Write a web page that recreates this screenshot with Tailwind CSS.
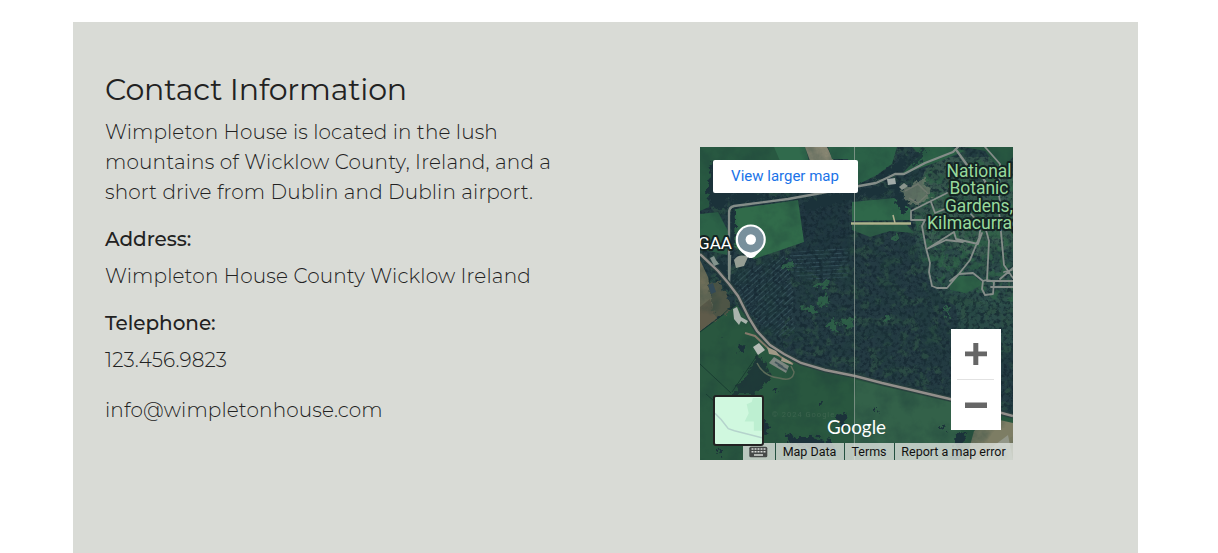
<!DOCTYPE html>
<html lang="en"><head><meta charset="utf-8"><title>Contact Information</title>
<script src="https://cdn.jsdelivr.net/npm/@tailwindcss/browser@4"></script></head>
<body class="h-[553px] overflow-hidden bg-white pt-[22px] pl-[73px]">
<section class="flex h-[531px] w-[1065px] bg-[#d9dbd6] text-[#222] font-['Montserrat','Inter',sans-serif]">
  <div class="w-[595px] pt-[50px] pl-8 whitespace-nowrap text-[20px] leading-[30px] font-light">
    <h2 class="text-[30px] leading-9 font-normal mb-[9px]"><span class="tracking-[-0.15px]">Contact Information</span></h2>
    <p class="mb-[17px]"><span class="tracking-[0.12px]">Wimpleton House is located in the lush</span><br><span class="tracking-[0.16px]">mountains of Wicklow County, Ireland, and a</span><br><span class="tracking-[0.12px]">short drive from Dublin and Dublin airport.</span></p>
    <h3 class="mb-[7px] font-medium"><span class="tracking-[-0.05px]">Address:</span></h3>
    <p class="mb-[17px]"><span class="tracking-[0.15px]">Wimpleton House County Wicklow Ireland</span></p>
    <h3 class="mb-[7px] font-medium"><span class="tracking-[-0.05px]">Telephone:</span></h3>
    <p class="mb-5"><span class="tracking-[0.12px]">123.456.9823</span></p>
    <p><span class="tracking-[0.12px]">info@wimpletonhouse.com</span></p>
  </div>
  <div class="pt-[125px] pl-8">
    <div class="relative h-[313px] w-[313px] overflow-hidden font-['Roboto',sans-serif]">
      <svg class="block" width="313" height="313" viewBox="0 0 313 313">
        <defs>
          <filter id="trees" x="0" y="0" width="100%" height="100%" color-interpolation-filters="sRGB"><feTurbulence type="fractalNoise" baseFrequency=".26" numOctaves="4" seed="7"/><feColorMatrix values="0 0 0 0 .08  0 0 0 0 .15  0 0 0 0 .19  4 2 0 0 -2.8"/></filter>
          <filter id="light" x="0" y="0" width="100%" height="100%" color-interpolation-filters="sRGB"><feTurbulence type="fractalNoise" baseFrequency=".1" numOctaves="5" seed="3"/><feColorMatrix values="0 0 0 0 .19  0 0 0 0 .33  0 0 0 0 .27  0 5 0 0 -2.5"/></filter>
          <filter id="garden" x="0" y="0" width="100%" height="100%" color-interpolation-filters="sRGB"><feTurbulence type="fractalNoise" baseFrequency=".13" numOctaves="4" seed="9" result="n"/><feColorMatrix values="0 0 0 0 .2  0 0 0 0 .42  0 0 0 0 .29  0 6 0 0 -2.900"/><feComposite in2="SourceAlpha" operator="in"/></filter>
          <filter id="grass" x="0" y="0" width="100%" height="100%" color-interpolation-filters="sRGB"><feTurbulence type="fractalNoise" baseFrequency=".05" numOctaves="6" seed="12"/><feColorMatrix values="0 0 0 0 .12  0 0 0 0 .25  0 0 0 0 .23  2.200 0 0 0 -.9"/></filter>
          <filter id="rough" x="-10%" y="-10%" width="120%" height="120%" color-interpolation-filters="sRGB"><feTurbulence type="fractalNoise" baseFrequency=".22" numOctaves="3" seed="4"/><feDisplacementMap in="SourceGraphic" scale="12" xChannelSelector="R" yChannelSelector="G"/><feGaussianBlur stdDeviation=".5"/></filter>
          <pattern id="rows" width="5" height="4" patternUnits="userSpaceOnUse" patternTransform="rotate(-3)"><path d="M0 1.500H5" stroke="#34505a" stroke-width="1"/></pattern>
          <pattern id="diag" width="5" height="4" patternUnits="userSpaceOnUse" patternTransform="rotate(-42)"><path d="M0 1.500H5" stroke="#36525a" stroke-width="1"/></pattern>
        </defs>
        <path fill="#243b43" d="M0 0h313v313H0z"/>
        <path fill="#345650" d="M212 70 313 70V158L275 160 245 155 220 120z" opacity=".6"/>
        <path fill="#3e5f52" d="M225 22 245 10 290 10 313 30V100L280 110 230 95 212 70z" opacity=".8"/>
        <path fill="#31564f" d="M255 155 313 150V205H262z" opacity=".6"/>
        <rect width="313" height="313" filter="url(#light)" opacity=".65"/>
        <path d="M100 58 148 48 150 110 122 132 85 110 103 97z" fill="#1f353f" opacity=".7"/><path d="M86 106 148 100V132L115 134 92 127z" fill="url(#rows)"/>
        <path d="M31 128 84 109 90 127 92 160 78 190 60 176 43 159z" fill="#1f353f" opacity=".7"/><path d="M31 128 84 109 90 127 94 150 92 166 96 185 78 190 60 176 43 159z" fill="url(#diag)"/>
        <rect width="313" height="313" filter="url(#trees)" opacity=".7"/>
        <path d="M225 25 313 5V155L248 145 222 115 214 65z" filter="url(#garden)" opacity=".65"/>
        <g fill="#285841">
          <path d="M0 0H106L108 13 12 14 9 60 0 64z"/>
          <path fill="#306a4c" d="M74 0H105L109 14H80z"/><path fill="#918c77" d="M105 0H127L134 14H110z"/>
          <path fill="#2b6147" d="M128 0H197L192 17 177 28 155 39 148 12H132z"/>
          <path fill="#2c6046" d="M212 0H252L265 4 240 14 201 28 220 8z"/><path d="M264 0H313V10L300 23 285 4z"/>
          <path fill="#316b4a" d="M35 62 98 53 104 95 78 104 54 112 34 100z"/>
          <path fill="#2c6247" d="M0 67 18 65 28 84 27 108 0 102z"/>
          <path fill="#2f684a" d="M152 55 194 51 211 62V73L152 74z"/><path fill="#2e5e47" d="M152 78 207 78 214 86 190 84 170 90 152 83z"/>
          <path fill="#29573f" d="M0 185 37 158 54 179 76 204 101 217 155 231 313 269V313H0z"/>
          <path fill="#336149" d="M156 233 251 255 263 290 245 313H152z"/>
          <path fill="#2e6247" d="M250 134 260 129 274 129 284 137 266 146 250 143z"/>
        </g>
        <path fill="#6f6e59" d="M0 113 8 130 14 162 17 171 0 184z"/><path fill="#5f5b4a" d="M0 160 10 152 17 171 0 184z"/>
        <path fill="#4e5546" d="M8 137 18 133 29 152 31 164 15 173z" filter="url(#rough)"/>
        <path fill="#7d7d64" d="M274 284 291 271 313 276V313H266z"/><path fill="#929688" d="M275 313 308 288 313 313z"/>
        <path fill="#1e3838" d="M58 209 68 219 70 232 53 248H32z" filter="url(#rough)"/>
        <rect width="313" height="313" filter="url(#grass)" opacity=".4"/>
        <g fill="#1b323a" filter="url(#rough)">
          <path d="M12 17 24 21 31 47 24 62 12 59 7 46zM32 47 48 42 68 50 90 50 77 53 50 54 34 61z"/>
          <path d="M103 55 122 48 155 43 185 38 186 48 158 50 126 60 107 65zM160 38 180 28 200 12 208 8 203 24 183 32zM190 34 202 34 199 46 209 58 203 68 196 54z"/>
          <path d="M30 66 35 66 35 98 31 106zM22 113 32 128 36 134 33 144 23 137 13 124zM63 269 69 277 67 290 51 288zM85 286 95 290 112 290 132 294 134 302 115 302 90 297zM135 267 146 266 147 275 140 280zM256 285 268 286 260 302 261 313H254z"/>
          <path d="M215 6 226 0 222 14 212 20z" opacity=".8"/>
          <circle cx="42" cy="201" r="4"/><circle cx="21" cy="191" r="1.500"/><circle cx="121" cy="256" r="2"/><circle cx="175" cy="261" r="2"/><circle cx="242" cy="281" r="2"/><circle cx="20" cy="304" r="3"/><circle cx="76" cy="243" r="1.500"/>
        </g>
        <g fill="#31694a" filter="url(#rough)" opacity=".75"><path d="M112 138 130 133 129 141 112 140zM118 154 126 145 130 157 119 161zM101 159 116 161 115 166 104 164zM144 172 155 170 151 181 139 177zM246 155 250 174 244 164z"/><circle cx="88" cy="118" r="4"/><circle cx="195" cy="91" r="2.500"/><circle cx="187" cy="172" r="3"/><circle cx="132" cy="178" r="5"/></g>
        <g stroke="#17382f" fill="none" opacity=".8"><path d="M0 217 31 246M58 207 32 245M0 185 20 170 34 157M6 247 14 254"/></g>
        <path fill="#687868" opacity=".8" filter="url(#rough)" d="M201 42 213 37 224 31 231 50 220 58 208 55z"/>
        <path d="M205 44 218 37 228 47 218 56 209 51" fill="none" stroke="#808279" stroke-width="1.500" opacity=".5"/>
        <g fill="none" stroke="#858d89" stroke-linejoin="round" stroke-linecap="round">
          <path stroke-width="2.300" d="M29 128V66Q29 60 34 59L88 52 116 47 148 41 176 36 189 30 195 27 204 27 225 16 253 5 258 0M257 4 267 18 281 28 288 39"/>
          <path stroke-width="1.800" d="M285 0 300 17 299 48 301 63M285 36 299 49M299 63 301 85 304 118 313 131M304 125 312 123M313 121 300 132"/>
          <path stroke-width="1.800" d="M211 73V64L247 46M231 55 235 66 252 59M211 73H225L222 79 226 101 230 116 229 125 232 139 237 141H247L258 128 270 113 279 91 281 78M227 102 254 85 256 92 278 97 282 86M229 101 246 93 263 95M250 134 259 127 273 126 283 134M286 83 289 94 287 133M287 134H313M291 140H313M283 134Q288 132 294 135L293 147 285 148 282 142ZM270 66 281 78 305 80"/>
        </g>
        <path d="M151 76.500H211" stroke="#aeb48b" stroke-width="2.500"/><path d="M193 68 195 76" stroke="#b0af8f" stroke-width="1.500"/>
        <path d="M34 113Q39 106 48 110L44 119 36 121z" fill="#969e94"/><path d="M29 135 30 108" stroke="#7c8a83" stroke-width="2.500"/>
        <path d="M0 107 18 124 29 137 38 149 49 171 57 184 70 198 84 207 101 216 125 223 155 229 182 236 250 252 313 269" fill="none" stroke="#2b4140" stroke-width="5"/>
        <path d="M0 107 18 124 29 137 38 149 49 171 57 184 70 198 84 207 101 216 125 223 155 229 182 236 250 252 313 269" fill="none" stroke="#938f8b" stroke-width="2.400"/>
        <path d="M45 186 55 189 69 202 84 212 93 217" fill="none" stroke="#85796a" stroke-width="2"/><path d="M57 216Q63 229 79 231 93 235 94 225L91 219" fill="none" stroke="#5c6c59" stroke-width="1.500"/>
        <g><path d="M53 200 59 196 65 203 58 208z" fill="#b5bbb5"/><path d="M69 216 74 210 89 219 86 226z" fill="#7c8680"/><path d="M67 200 76 204 80 209 69 207zM82 210 91 215 93 218 81 214z" fill="#a09886"/><path d="M75 215 83 220M78 218 87 223" stroke="#43565b" stroke-width="2"/><path d="M33 162 37 160 41 170 48 174 46 177 41 174 39 178 34 172z" fill="#aab4ad"/><path d="M10 111 14 109 16 113 19 117 14 119z" fill="#82938c"/><path d="M8 138 13 136 16 145 11 147z" fill="#334a57"/></g>
        <path d="M187 32 195 31 196 37 188 38z" fill="#a2aba8"/><path d="M199 40 204 36 208 39 202 43z" fill="#8b958d"/>
        <path d="M154.500 0V313" stroke="#a0aaa2" opacity=".65"/>
        <text x="72" y="270" fill="#607d69" opacity=".35" font-size="7.500" letter-spacing="1">© 2024 Google</text>
        <g font-family="Roboto" font-size="17.500" paint-order="stroke" stroke="#142423" stroke-width="4" stroke-linejoin="round">
          <g fill="#98d99c"><text x="246.500" y="29.500" textLength="65" lengthAdjust="spacingAndGlyphs">National</text><text x="249.500" y="47" textLength="59" lengthAdjust="spacingAndGlyphs">Botanic</text><text x="245" y="64.500" textLength="68" lengthAdjust="spacingAndGlyphs">Gardens,</text><text x="227" y="82" textLength="95" lengthAdjust="spacingAndGlyphs">Kilmacurrag</text></g>
          <text x="-2" y="101.500" fill="white" font-size="17" textLength="34" lengthAdjust="spacingAndGlyphs">GAA</text>
        </g>
        <path d="M50.500 77.500a15 15 0 0 0-14.800 15c0 7 3.800 11 8.300 14.500 2 1.700 3 4 6.800 4s4.500-2.300 6.500-4c4.500-3.500 8.500-8 8.500-14.500a15 15 0 0 0-15.300-15z" fill="white"/><circle cx="50.800" cy="92.500" r="12.900" fill="#78909c"/><circle cx="50.800" cy="92.500" r="5.200" fill="white"/>
        <text x="127" y="286.500" font-family="Lato" font-size="20" fill="white" textLength="59" lengthAdjust="spacingAndGlyphs">Google</text>
      </svg>
      <a class="absolute top-[13px] left-[13px] flex h-[33px] w-[145px] items-center justify-center rounded-[2px] bg-white pr-px pb-px text-[15px] text-[#1a73e8] whitespace-nowrap">View larger map</a>
      <div class="absolute top-[182px] left-[251px] flex h-[101px] w-[50px] flex-col items-center bg-white">
        <svg width="50" height="101" viewBox="0 0 50 101"><path d="M14 22.500h8.300v-8.500h5v8.500H36v4.700h-8.700V36h-5v-8.800H14zM14 73.500h22V79H14z" fill="#666"/><path d="M6 50.500h37" stroke="#e2e2e2"/></svg>
      </div>
      <div class="absolute right-0 bottom-0 flex h-[17px] w-[270px] bg-[#dfe4df]/80 text-[12.5px] leading-[17px] text-[#111] whitespace-nowrap">
        <div class="flex w-[32px] items-center pl-[6px]"><svg width="19" height="12" viewBox="0 0 19 12"><rect x=".3" y=".8" width="18" height="10.500" rx="1.500" fill="#454948"/><path d="M2.500 3h2m1 0h2m1 0h2m1 0h2m1 0h2M2.500 5.700h2m1 0h2m1 0h2m1 0h2m1 0h2M5 9h9" stroke="#d8dbd8" stroke-width="1.400"/></svg></div>
        <span class="w-[69px] border-l border-[#245040] pr-px text-center">Map Data</span><span class="w-[50px] border-l border-[#245040] pr-px text-center">Terms</span><span class="w-[119px] border-l border-[#245040] pr-px text-center">Report a map error</span>
      </div>
      <div class="absolute top-[248px] left-[13px] h-[51px] w-[51px] overflow-hidden rounded-[3px] border-2 border-[#222] bg-[#d0f8df]"><svg width="47" height="47" viewBox="0 0 46 46"><path d="M31 7 36 5 37 1H46V33H38V24H29L33 16z" fill="#bdefd1"/><path d="M0 16 6 22 13 31 19 33 46 40" fill="none" stroke="#b5d3cc" stroke-width="1.500"/></svg></div>
    </div>
  </div>
</section>
</body></html>
